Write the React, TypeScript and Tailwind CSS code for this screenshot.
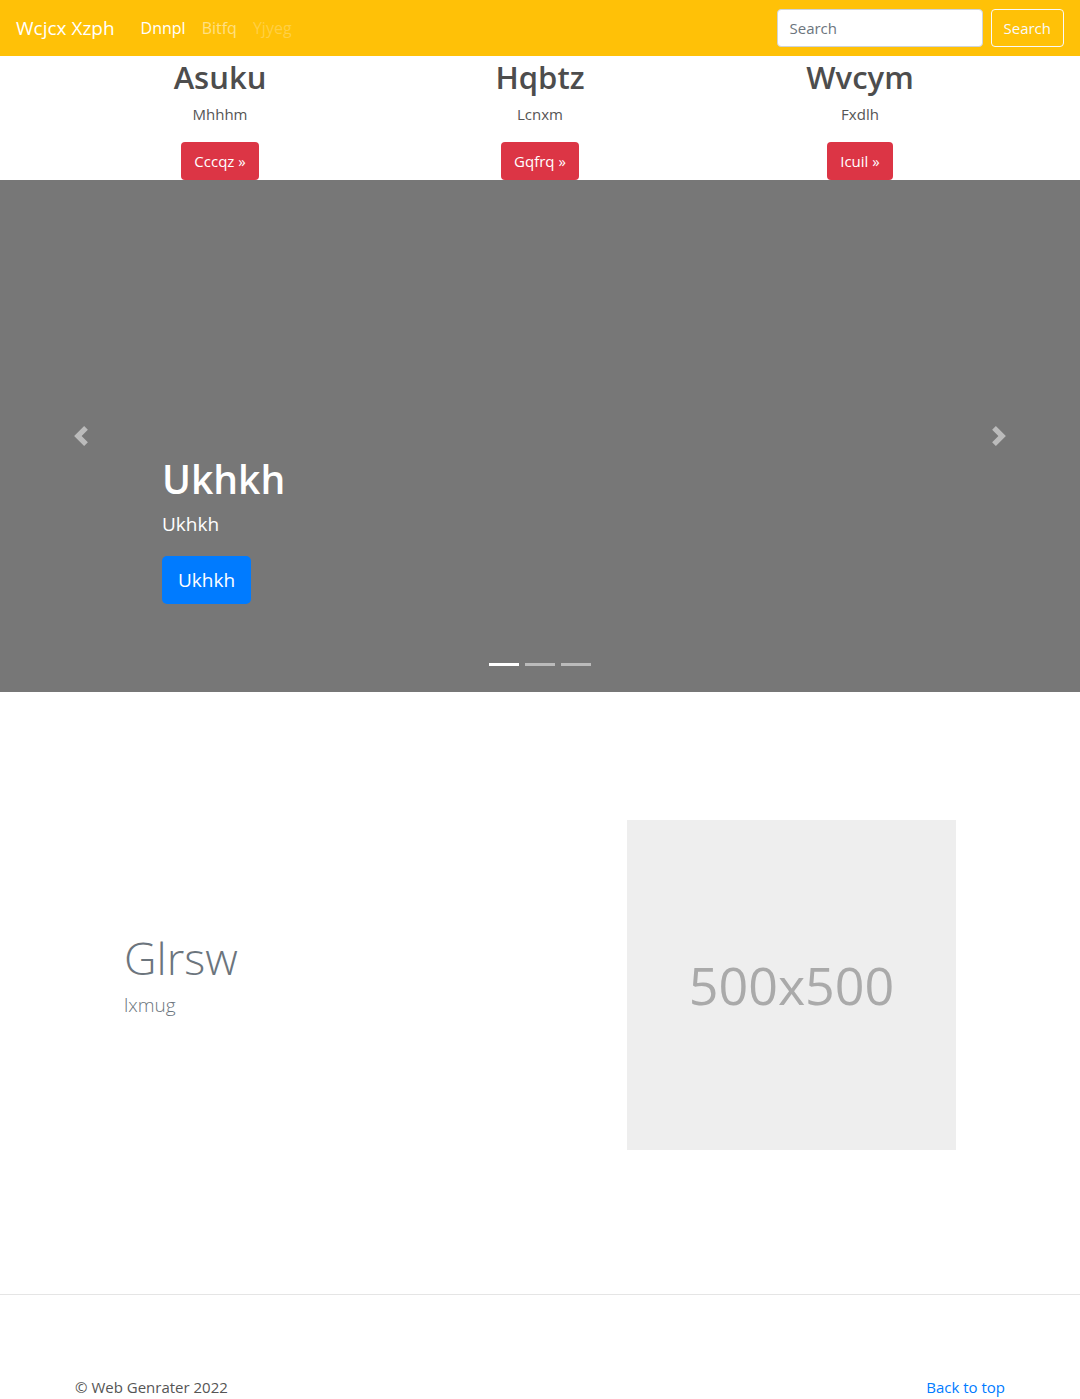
import React from "react";

const font = { fontFamily: '"Open Sans", "Noto Sans", Arial, sans-serif' };

function Chevron({ dir }: { dir: "left" | "right" }) {
  return (
    <svg width="20" height="20" viewBox="0 0 8 8" fill="#fff" className="opacity-50">
      {dir === "left" ? (
        <path d="M5.25 0l-4 4 4 4 1.5-1.5L4.25 4l2.5-2.5L5.25 0z" />
      ) : (
        <path d="M2.75 0l-1.5 1.5L3.75 4l-2.5 2.5L2.75 8l4-4-4-4z" />
      )}
    </svg>
  );
}

export default function App() {
  const cols = [
    { h: "Asuku", p: "Mhhhm", b: "Cccqz" },
    { h: "Hqbtz", p: "Lcnxm", b: "Gqfrq" },
    { h: "Wvcym", p: "Fxdlh", b: "Icuil" },
  ];
  return (
    <div style={font} className="w-[1080px] bg-white text-[#212529]">
      {/* Navbar */}
      <nav className="h-[56px] bg-[#ffc107] flex items-center px-4">
        <span className="text-white text-[19px] leading-[30px] mr-[18px]">Wcjcx Xzph</span>
        <div className="flex items-center text-[16px]">
          <span className="px-2 text-white">Dnnpl</span>
          <span className="px-2 text-white/50">Bitfq</span>
          <span className="px-2 text-white/25">Yjyeg</span>
        </div>
        <div className="ml-auto flex items-center">
          <div className="w-[206px] h-[38px] bg-white border border-[#ced4da] rounded-[4px] px-3 flex items-center text-[15px] text-[#6c757d]">
            Search
          </div>
          <div className="ml-2 h-[38px] px-3 border border-[#f8f9fa] rounded-[4px] flex items-center text-[15px] text-[#f8f9fa]">
            Search
          </div>
        </div>
      </nav>

      {/* Marketing */}
      <div className="w-[960px] mx-auto grid grid-cols-3">
        {cols.map((c) => (
          <div key={c.h} className="flex flex-col items-center">
            <h2 className="text-[31px] leading-[38px] font-semibold text-[#4d4d4d] mt-[2px] mb-[6px]">{c.h}</h2>
            <p className="text-[15px] leading-[24px] text-[#555] mb-4">{c.p}</p>
            <div className="h-[38px] px-[13px] bg-[#dc3545] rounded-[4px] text-white text-[15px] flex items-center">
              {c.b} »
            </div>
          </div>
        ))}
      </div>

      {/* Carousel */}
      <div className="relative h-[512px] bg-[#777] flex">
        <div className="w-[162px] flex items-center justify-center">
          <Chevron dir="left" />
        </div>
        <div className="flex-1 flex flex-col justify-end pb-[88px] text-white">
          <h1 className="text-[39px] leading-[48px] font-semibold mb-2">Ukhkh</h1>
          <p className="text-[19px] leading-[30px] mb-[17px] -mt-[2px]">Ukhkh</p>
          <div className="self-start h-[48px] px-4 bg-[#007bff] rounded-[5px] text-[19px] flex items-center">
            Ukhkh
          </div>
        </div>
        <div className="w-[162px] flex items-center justify-center">
          <Chevron dir="right" />
        </div>
        <div className="absolute left-0 right-0 bottom-[26px] flex justify-center gap-[6px]">
          <span className="w-[30px] h-[3px] bg-white" />
          <span className="w-[30px] h-[3px] bg-white/50" />
          <span className="w-[30px] h-[3px] bg-white/50" />
        </div>
      </div>

      {/* Feature */}
      <div className="w-[960px] mx-auto flex items-center pt-[128px] pb-[144px]">
        <div className="w-[567px] pl-[64px] pb-[20px] text-[#6c757d]">
          <h2 className="text-[45px] leading-[55px] font-light mb-[5px]">Glrsw</h2>
          <p className="text-[19px] leading-[30px] font-light">lxmug</p>
        </div>
        <div className="w-[329px] h-[330px] bg-[#eee] flex items-center justify-center text-[#aaa] text-[52px]">
          500x500
        </div>
      </div>

      <div className="h-px bg-[#e5e5e5]" />

      {/* Footer */}
      <footer className="w-[960px] mx-auto px-[15px] pt-[80px] flex justify-between text-[15px] leading-[24px]">
        <span className="text-[#555]">© Web Genrater 2022</span>
        <span className="text-[#007bff]">Back to top</span>
      </footer>
    </div>
  );
}
